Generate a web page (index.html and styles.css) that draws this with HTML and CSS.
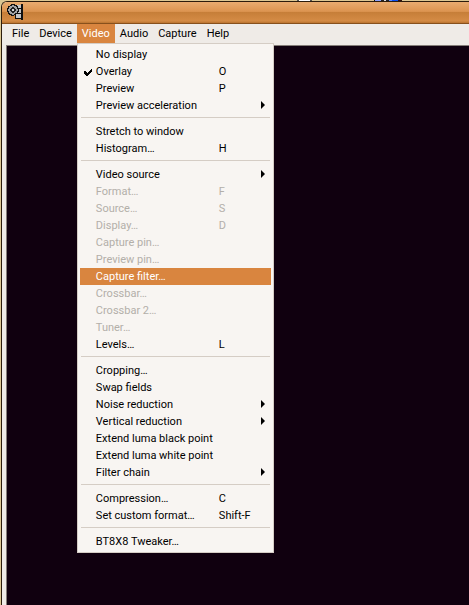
FILE: index.html
```
<!DOCTYPE html>
<html lang="en">
<head>
<meta charset="utf-8">
<title>Video capture</title>
<link rel="stylesheet" href="styles.css">
</head>
<body>
<div class="window">
  <header class="titlebar">
    <svg class="app-icon" width="16" height="16" viewBox="0 0 16 16" shape-rendering="crispEdges" aria-hidden="true">
      <path fill="#111" d="M14 0h2v16h-2v-1H8v-5h1V4h1V1h4z"/>
      <path fill="#c4c5c7" d="M10 1h4v3h-4zM10 5h4v4h-4zM9 10h5v4H9z"/>
      <path fill="#111" d="M4 0h4v1h2v1h1v2h1v4h-1v2H9v1H7v1H4v-1H2v-1H1V8H0V4h1V2h2V1h1z"/>
      <path fill="#a3a4a6" d="M5 1h2v1h2v1h1v2h1v2h-1v2H8v1H7v1H5v-1H3V9H2V7H1V5h1V3h1V2h2z"/>
      <path fill="#222" d="M5 3h2v1h1v1h1v2H8v1H7v1H5V8H4V7H3V5h1V4h1z"/>
      <path fill="#d4d5d7" d="M5 5h2v2H5z"/>
    </svg>
  </header>
  <nav class="menubar" aria-label="Main">
    <button class="menu-title">File</button>
    <button class="menu-title">Device</button>
    <div class="menu-anchor">
      <button class="menu-title open" aria-expanded="true">Video</button>
      <div class="menu" role="menu">
        <button class="item" role="menuitem">No display</button>
        <button class="item" role="menuitemcheckbox" aria-checked="true"><svg class="check" width="8" height="8" viewBox="0 0 8 8" shape-rendering="crispEdges" aria-hidden="true"><path d="M0 3h2v1h1v1h1V4h1V3h1V2h1V1h1v3H7v1H6v1H5v1H4v1H2V7H1V6H0z"/></svg>Overlay<span class="key">O</span></button>
        <button class="item" role="menuitem">Preview<span class="key">P</span></button>
        <button class="item sub" role="menuitem" aria-haspopup="true">Preview acceleration</button>
        <hr>
        <button class="item" role="menuitem">Stretch to window</button>
        <button class="item" role="menuitem">Histogram…<span class="key">H</span></button>
        <hr>
        <button class="item sub" role="menuitem" aria-haspopup="true">Video source</button>
        <button class="item" role="menuitem" disabled>Format…<span class="key">F</span></button>
        <button class="item" role="menuitem" disabled>Source…<span class="key">S</span></button>
        <button class="item" role="menuitem" disabled>Display…<span class="key">D</span></button>
        <button class="item" role="menuitem" disabled>Capture pin…</button>
        <button class="item" role="menuitem" disabled>Preview pin…</button>
        <button class="item active" role="menuitem">Capture filter…</button>
        <button class="item" role="menuitem" disabled>Crossbar…</button>
        <button class="item" role="menuitem" disabled>Crossbar 2…</button>
        <button class="item" role="menuitem" disabled>Tuner…</button>
        <button class="item" role="menuitem">Levels…<span class="key">L</span></button>
        <hr>
        <button class="item" role="menuitem">Cropping…</button>
        <button class="item" role="menuitem">Swap fields</button>
        <button class="item sub" role="menuitem" aria-haspopup="true">Noise reduction</button>
        <button class="item sub" role="menuitem" aria-haspopup="true">Vertical reduction</button>
        <button class="item" role="menuitem">Extend luma black point</button>
        <button class="item" role="menuitem">Extend luma white point</button>
        <button class="item sub" role="menuitem" aria-haspopup="true">Filter chain</button>
        <hr>
        <button class="item" role="menuitem">Compression…<span class="key">C</span></button>
        <button class="item" role="menuitem">Set custom format…<span class="key">Shift-F</span></button>
        <hr>
        <button class="item" role="menuitem">BT8X8 Tweaker…</button>
      </div>
    </div>
    <button class="menu-title">Audio</button>
    <button class="menu-title">Capture</button>
    <button class="menu-title">Help</button>
  </nav>
  <main class="video"></main>
</div>
</body>
</html>
```
FILE: styles.css
```
* { box-sizing: border-box; }

body {
  margin: 0;
  padding: 1px 0 0 1px;
  height: 100vh;
  overflow: hidden;
  background:
    linear-gradient(90deg, #555 2px, #fff 2px 13px, #555 13px) 297px 0 / 15px 1px no-repeat,
    linear-gradient(90deg, #111 1px, #8fa4ff 1px 7px, #222 7px 10px, #ddd 10px 12px, #222 12px 15px, #5f8cff 15px 18px, #0a50f0 18px 24px, #301010 24px) 374px 0 / 28px 1px no-repeat,
    #dcc793;
  font: 11px/17px Roboto, "Open Sans", sans-serif;
  color: #000;
}

.window {
  display: flex;
  flex-direction: column;
  height: 100%;
  border: solid #2c1c0c;
  border-width: 1px 0 0 1px;
  border-top-left-radius: 6px;
  background: #efebe7;
}

.titlebar {
  flex: none;
  height: 22px;
  padding: 2px 5px;
  border-bottom: 1px solid #87501c;
  border-top-left-radius: 5px;
  background: linear-gradient(#e9ac70, #dc9450 45%, #c67e38 48%, #d48b45 90%, #b9732f);
}

.app-icon { display: block; }

.menubar {
  display: flex;
  flex: none;
  height: 19px;
  padding-left: 5px;
}

button {
  margin: 0;
  border: 0;
  background: none;
  font: inherit;
  color: inherit;
  text-align: left;
  white-space: nowrap;
}

.menu-title {
  height: 19px;
  padding: 0 5px;
}

.menu-title.open,
.item.active {
  background: #d9853f;
  color: #fff;
}

.menu-anchor { position: relative; }

.menu {
  position: absolute;
  z-index: 1;
  top: 100%;
  left: 0;
  width: 197px;
  padding: 2px;
  border: 1px solid #d5cdc5;
  background: #f8f5f2;
}

.item {
  position: relative;
  display: block;
  width: 100%;
  height: 17px;
  padding: 0 0 0 16px;
}

.item:disabled { color: #b3afa9; }

.key {
  position: absolute;
  left: 139px;
}

.check {
  position: absolute;
  top: 5px;
  left: 4px;
}

.sub::after {
  content: "";
  position: absolute;
  top: 4px;
  right: 6px;
  border: solid transparent;
  border-width: 4px 0 4px 4px;
  border-left-color: #000;
}

hr {
  height: 1px;
  margin: 3px 1px 5px;
  border: 0;
  background: #d5cdc5;
}

.video {
  flex: 1;
  margin: 2px 0 0 4px;
  border: solid #847d78;
  border-width: 1px 0 0 1px;
  background: #10000f;
}
```
